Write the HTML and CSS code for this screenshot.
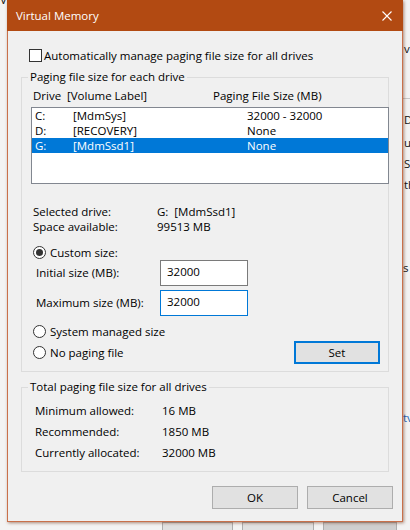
FILE: index.html
```html
<!DOCTYPE html>
<html>
<head>
<meta charset="utf-8">
<link rel="stylesheet" href="styles.css">
</head>
<body>
<span class="frag frag-vi">Vi</span>
<span class="frag frag-ve">ve</span>
<span class="frag-line"></span>
<span class="frag frag-d">D</span>
<span class="frag frag-us">us</span>
<span class="frag frag-sy">Sy</span>
<span class="frag frag-th">th</span>
<span class="frag frag-s">s</span>
<span class="frag frag-tv">tv</span>
<span class="bgbtn bgbtn-1">OK</span>
<span class="bgbtn bgbtn-2">Cancel</span>
<span class="bgbtn bgbtn-3">Apply</span>

<div class="dialog">
  <div class="titlebar">
    <span class="title">Virtual Memory</span>
    <svg class="close" width="10" height="10" viewBox="0 0 10 10"><path d="M0.5 0.5 L9.5 9.5 M9.5 0.5 L0.5 9.5" stroke="#fff" stroke-width="1.1" fill="none"/></svg>
  </div>
  <div class="body">
    <div class="checkrow"><span class="checkbox"></span><span>Automatically manage paging file size for all drives</span></div>

    <fieldset class="group group-drives">
      <legend>Paging file size for each drive</legend>
      <div class="listhead"><span class="c1">Drive</span><span class="c2">[Volume Label]</span><span>Paging File Size (MB)</span></div>
      <div class="listbox">
        <div class="lrow"><span>C:</span><span>[MdmSys]</span><span>32000 - 32000</span></div>
        <div class="lrow"><span>D:</span><span>[RECOVERY]</span><span>None</span></div>
        <div class="lrow selected"><span>G:</span><span>[MdmSsd1]</span><span>None</span></div>
      </div>
      <div class="info">
        <span>Selected drive:</span><span>G:&nbsp; [MdmSsd1]</span>
        <span>Space available:</span><span>99513 MB</span>
      </div>
      <div class="radiorow custom"><span class="radio checked"></span><span>Custom size:</span></div>
      <div class="sizerow first"><span>Initial size (MB):</span><span class="input">32000</span></div>
      <div class="sizerow second"><span>Maximum size (MB):</span><span class="input focused">32000</span></div>
      <div class="radiorow system"><span class="radio"></span><span>System managed size</span></div>
      <div class="lastrow">
        <div class="radiorow"><span class="radio"></span><span>No paging file</span></div>
        <span class="btn setbtn">Set</span>
      </div>
    </fieldset>

    <fieldset class="group group-total">
      <legend>Total paging file size for all drives</legend>
      <div class="totals">
        <span>Minimum allowed:</span><span>16 MB</span>
        <span>Recommended:</span><span>1850 MB</span>
        <span>Currently allocated:</span><span>32000 MB</span>
      </div>
    </fieldset>

    <div class="buttons">
      <span class="btn">OK</span>
      <span class="btn">Cancel</span>
    </div>
  </div>
</div>
</body>
</html>
```
FILE: styles.css
```css
* { box-sizing: border-box; }

body {
  margin: 0;
  width: 410px;
  height: 530px;
  overflow: hidden;
  position: relative;
  background: #f3f3f3;
  font-family: "Open Sans", "Noto Sans", sans-serif;
  font-size: 11.5px;
  color: #000;
}

.frag { position: absolute; font-size: 11.5px; line-height: 14px; color: #111; }
.frag-vi { left: 0; top: -7px; }
.frag-ve { left: 404px; top: 42px; }
.frag-d { left: 404px; top: 113px; }
.frag-us { left: 404px; top: 136px; }
.frag-sy { left: 404px; top: 157px; }
.frag-th { left: 404px; top: 178px; }
.frag-s { left: 403px; top: 261px; }
.frag-tv { left: 403px; top: 411px; color: #1a5fb4; }
.frag-line { position: absolute; left: 403px; top: 98px; width: 7px; height: 1px; background: #c8c8c8; }

.bgbtn {
  position: absolute;
  top: 522px;
  height: 23px;
  border: 1px solid #adadad;
  background: #e1e1e1;
  text-align: center;
  line-height: 21px;
}
.bgbtn-1 { left: 162px; width: 71px; }
.bgbtn-2 { left: 242px; width: 72px; }
.bgbtn-3 { left: 323px; width: 74px; background: #cfcfcf; }

.dialog {
  position: absolute;
  left: 7px;
  top: 0;
  width: 396px;
  height: 522px;
  display: flex;
  flex-direction: column;
  box-shadow: 1px 1px 3px rgba(110, 50, 20, 0.55);
}

.titlebar {
  height: 31px;
  flex: none;
  background: #b24a12;
  color: #fff;
  display: flex;
  align-items: center;
  justify-content: space-between;
  padding: 0 11px 0 9px;
}
.title { line-height: 16px; font-size: 11.5px; }
.close { display: block; }

.body {
  flex: 1;
  background: #f0f0f0;
  border: 1px solid #c9704a;
  border-top: none;
  display: flex;
  flex-direction: column;
  align-items: flex-start;
}

.checkrow {
  margin: 18px 0 0 21px;
  height: 13px;
  display: flex;
  align-items: center;
  gap: 2px;
  line-height: 13px;
}
.checkbox {
  width: 13px;
  height: 13px;
  border: 1px solid #333;
  background: #fff;
}

.group {
  margin: 7px 0 0 13px;
  width: 368px;
  min-width: 0;
  border: 1px solid #dcdcdc;
  padding: 0 0 7px 0;
}
.group legend {
  padding: 0 2px;
  margin-left: 6px;
  line-height: 16px;
}

.listhead {
  margin: 3px 0 0 11px;
  line-height: 15px;
  display: flex;
}
.listhead .c1 { width: 34px; }
.listhead .c2 { width: 146px; }

.listbox {
  margin: 4px 0 0 9px;
  width: 358px;
  height: 77px;
  border: 1px solid #828790;
  background: #fff;
}
.lrow {
  display: grid;
  grid-template-columns: 38px 174px 1fr;
  padding-left: 3px;
  line-height: 15px;
  height: 15px;
}
.lrow.selected { background: #0078d7; color: #fff; }

.info {
  margin: 20px 0 0 11px;
  display: grid;
  grid-template-columns: 124px auto;
  line-height: 15px;
}

.radiorow {
  display: flex;
  align-items: center;
  gap: 4px;
  height: 13px;
  line-height: 13px;
}
.radiorow.custom { margin: 12px 0 0 11px; }
.radiorow.system { margin: 9px 0 0 11px; }
.radio {
  width: 13px;
  height: 13px;
  border: 1px solid #333;
  border-radius: 50%;
  background: #fff;
  display: flex;
  align-items: center;
  justify-content: center;
}
.radio.checked::after {
  content: "";
  width: 7px;
  height: 7px;
  border-radius: 50%;
  background: #333;
}

.sizerow {
  display: grid;
  grid-template-columns: 124px 88px;
  align-items: center;
  margin-left: 14px;
}
.sizerow.first { margin-top: 1px; }
.sizerow.second { margin-top: 4px; }
.sizerow > span:first-child { padding-bottom: 2px; }

.input {
  height: 26px;
  border: 1px solid #7a7a7a;
  background: #fff;
  padding: 0 0 3px 6px;
  display: flex;
  align-items: center;
}
.input.focused { border-color: #0078d7; }

.lastrow {
  margin: 3px 0 0 11px;
  width: 347px;
  display: flex;
  align-items: center;
  justify-content: space-between;
}

.btn {
  width: 86px;
  height: 23px;
  border: 1px solid #adadad;
  background: #e1e1e1;
  display: flex;
  align-items: center;
  justify-content: center;
  line-height: 15px;
}
.setbtn {
  border: 2px solid #0078d7;
}

.totals {
  margin: 5px 0 0 13px;
  display: grid;
  grid-template-columns: 127px auto;
  line-height: 21px;
}
.group-total { padding-bottom: 8px; }

.buttons {
  align-self: flex-end;
  margin: 14px 9px 0 0;
  display: flex;
  gap: 9px;
}
```
